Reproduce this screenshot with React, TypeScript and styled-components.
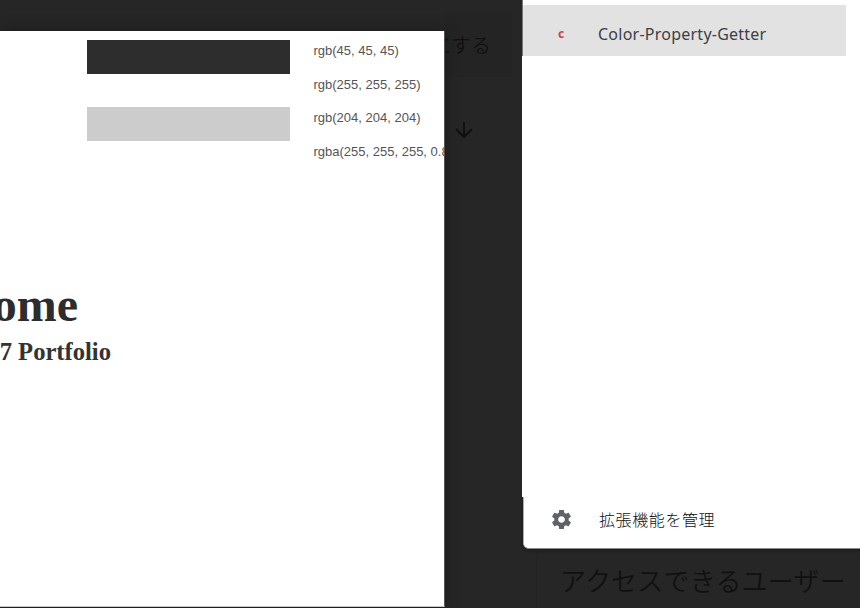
import React from "react";
import styled, { createGlobalStyle } from "styled-components";

const Global = createGlobalStyle`
  * { box-sizing: border-box; }
  body { margin: 0; background: #262626; overflow: hidden; }
`;

const Page = styled.div`
  width: 860px;
  height: 608px;
  display: grid;
  grid-template-columns: 445px 77px 338px;
  background: #262626;
  overflow: hidden;
`;

const PreviewColumn = styled.div`
  padding-top: 31px;
  height: 608px;
`;

const Preview = styled.section`
  height: 576px;
  background: #fff;
  overflow: hidden;
  border-right: 1px solid #555;
  border-bottom: 1px solid #c8c8c8;
  box-shadow: 0 0 14px rgba(0, 0, 0, 0.35);
  position: relative;
  z-index: 1;
`;

const Swatches = styled.div`
  padding: 9px 0 0 87px;
  height: 255px;
`;

const SwatchRow = styled.div`
  display: flex;
  height: 33.6px;
`;

const Swatch = styled.div<{ $color: string }>`
  width: 202.5px;
  flex: none;
  background: ${(p) => p.$color};
`;

const SwatchLabel = styled.span`
  margin-left: 24px;
  font: 13px/22px "Liberation Sans", Arial, sans-serif;
  color: #555;
  white-space: nowrap;
`;

const Heading = styled.h1`
  margin: 0;
  width: 78px;
  display: flex;
  justify-content: flex-end;
  font: bold 48px/38px "Liberation Serif", serif;
  color: #2d2d2d;
`;

const Subheading = styled.h2`
  margin: 15px 0 0;
  width: 111px;
  display: flex;
  justify-content: flex-end;
  white-space: nowrap;
  font: bold 24.6px/26px "Liberation Serif", serif;
  color: #333;
`;

const Gutter = styled.div`
  padding-top: 12px;
`;

const DimHeader = styled.div`
  height: 65px;
  width: 68px;
  background: #242424;
  display: flex;
  justify-content: flex-end;
  overflow: hidden;
  padding-right: 22px;
  white-space: nowrap;
  font: 350 20px/65px "Noto Sans CJK JP", sans-serif;
  color: #111;
`;

const Arrow = styled.svg`
  display: block;
  margin: 41px 0 0 7px;
`;

const MenuColumn = styled.div`
  display: flex;
  flex-direction: column;
`;

const MenuTop = styled.div`
  height: 56px;
  padding-top: 5px;
  border-left: 1px solid #777;
  background: #fff;
`;

const MenuItem = styled.div<{ $active?: boolean }>`
  height: 51px;
  width: 323px;
  display: flex;
  align-items: center;
  padding: ${(p) => (p.$active ? "7px 0 0 25px" : "0 0 7px 24px")};
  background: ${(p) => (p.$active ? "#e2e2e2" : "#fff")};
`;

const IconBox = styled.div`
  width: 26px;
  height: 26px;
  display: flex;
  align-items: center;
  justify-content: center;
`;

const Badge = styled.span`
  font: bold 12px/12px "Noto Sans", sans-serif;
  color: #c8405c;
`;

const ItemName = styled.span`
  margin-left: 24px;
  font: 16px/24px "Noto Sans", sans-serif;
  letter-spacing: 0.24px;
  color: #3c4043;
`;

const JapaneseName = styled(ItemName)`
  margin-left: 25px;
  font: 300 16px/24px "Noto Sans CJK JP", sans-serif;
  letter-spacing: 0.6px;
  color: #101114;
`;

const MenuBody = styled.div`
  height: 441px;
  background: #fff;
  position: relative;
  z-index: 1;
`;

const MenuFooter = styled.div`
  height: 52px;
  margin-left: 1px;
  background: #fff;
  border-bottom: 1px solid #8a8a8a;
  border-left: 1px solid #b0b0b0;
  border-bottom-left-radius: 6px;
  box-shadow: 0 2px 3px #1e1e1e;
  overflow: hidden;
`;

const Access = styled.div`
  flex: 1;
  margin-left: 14px;
  border-left: 1px solid #222;
  padding-left: 23px;
  overflow: hidden;
  white-space: nowrap;
  font: 350 26px/62px "Noto Sans CJK JP", sans-serif;
  letter-spacing: 0.2px;
  color: #111;
`;

const swatches = [
  { color: "#2d2d2d", label: "rgb(45, 45, 45)" },
  { color: "#ffffff", label: "rgb(255, 255, 255)" },
  { color: "#cccccc", label: "rgb(204, 204, 204)" },
  { color: "#ffffff", label: "rgba(255, 255, 255, 0.8)" },
];

const Gear = () => (
  <svg width="23" height="23" viewBox="0 0 24 24" fill="#5f6368">
    <path d="M19.43 12.98c.04-.32.07-.64.07-.98s-.03-.66-.07-.98l2.11-1.65c.19-.15.24-.42.12-.64l-2-3.46c-.12-.22-.39-.3-.61-.22l-2.49 1c-.52-.4-1.08-.73-1.69-.98l-.38-2.65C14.46 2.18 14.25 2 14 2h-4c-.25 0-.46.18-.49.42l-.38 2.65c-.61.25-1.17.59-1.69.98l-2.49-1c-.23-.09-.49 0-.61.22l-2 3.46c-.13.22-.07.49.12.64l2.11 1.65c-.04.32-.07.65-.07.98s.03.66.07.98l-2.11 1.65c-.19.15-.24.42-.12.64l2 3.46c.12.22.39.3.61.22l2.49-1c.52.4 1.08.73 1.69.98l.38 2.65c.03.24.24.42.49.42h4c.25 0 .46-.18.49-.42l.38-2.65c.61-.25 1.17-.59 1.69-.98l2.49 1c.23.09.49 0 .61-.22l2-3.46c.12-.22.07-.49-.12-.64l-2.11-1.65zM12 15.5c-1.93 0-3.5-1.57-3.5-3.5s1.57-3.5 3.5-3.5 3.5 1.57 3.5 3.5-1.57 3.5-3.5 3.5z" />
  </svg>
);

export default function App() {
  return (
    <>
      <Global />
      <Page>
        <PreviewColumn>
          <Preview>
            <Swatches>
              {swatches.map((s) => (
                <SwatchRow key={s.label}>
                  <Swatch $color={s.color} />
                  <SwatchLabel>{s.label}</SwatchLabel>
                </SwatchRow>
              ))}
            </Swatches>
            <Heading>ome</Heading>
            <Subheading>7 Portfolio</Subheading>
          </Preview>
        </PreviewColumn>
        <Gutter>
          <DimHeader>にする</DimHeader>
          <Arrow width="24" height="24" viewBox="0 0 24 24" fill="none" stroke="#101010" strokeWidth="2">
            <path d="M12 4v15M4 11l8 8 8-8" />
          </Arrow>
        </Gutter>
        <MenuColumn>
          <MenuTop>
            <MenuItem $active>
              <IconBox><Badge>c</Badge></IconBox>
              <ItemName>Color-Property-Getter</ItemName>
            </MenuItem>
          </MenuTop>
          <MenuBody />
          <MenuFooter>
            <MenuItem>
              <IconBox><Gear /></IconBox>
              <JapaneseName>拡張機能を管理</JapaneseName>
            </MenuItem>
          </MenuFooter>
          <Access>アクセスできるユーザー</Access>
        </MenuColumn>
      </Page>
    </>
  );
}
